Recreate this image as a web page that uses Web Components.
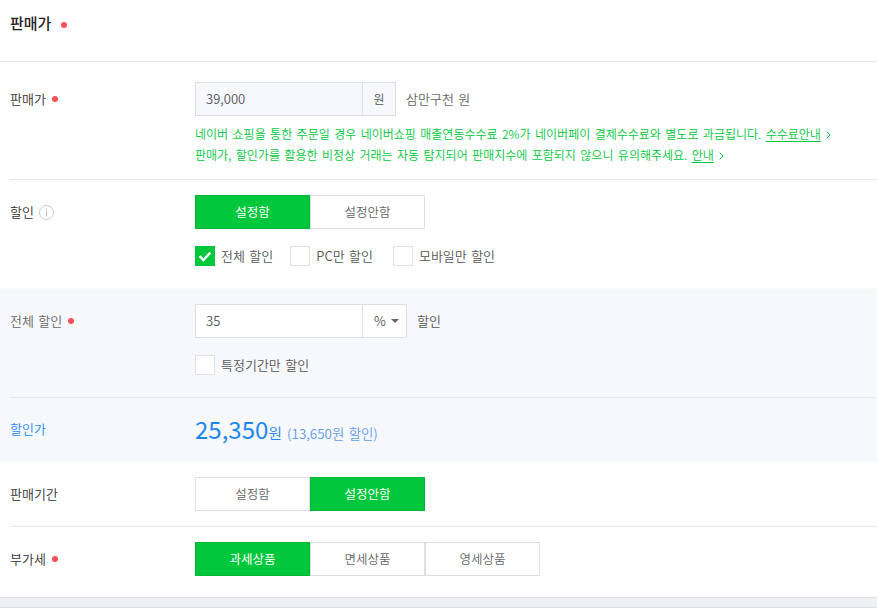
<!DOCTYPE html>
<html><head><meta charset="utf-8">
<style>
html,body{margin:0;padding:0;background:#fff;overflow:hidden}
body{font:350 13px/20px "Noto Sans CJK KR","Noto Sans",sans-serif;word-spacing:1.5px;color:#424242;width:877px;height:611px}
</style></head><body>
<price-form></price-form>
<script>
class ReqDot extends HTMLElement{constructor(){super();this.attachShadow({mode:'open'}).innerHTML=`<style>:host{display:inline-block;width:6px;height:6px;border-radius:50%;background:#ff5058;flex:none}</style>`}}
customElements.define('req-dot',ReqDot);

class FormRow extends HTMLElement{constructor(){super();this.attachShadow({mode:'open'}).innerHTML=`<style>
:host{display:grid;grid-template-columns:185px 1fr;padding:0 0 0 10px;box-sizing:border-box}
.l{display:flex;align-items:center;gap:6px;height:34px;font-size:13px;color:var(--lc,#333)}
.c{min-width:0}
</style><div class="l"><slot name="label"></slot></div><div class="c"><slot></slot></div>`}}
customElements.define('form-row',FormRow);

class BtnGroup extends HTMLElement{
 constructor(){super();this.attachShadow({mode:'open'})}
 connectedCallback(){
  const items=this.getAttribute('items').split('|'),on=+this.getAttribute('on');
  this.shadowRoot.innerHTML=`<style>
  :host{display:flex}
  span{box-sizing:border-box;width:115px;height:34px;display:flex;align-items:center;justify-content:center;background:#fff;border:1px solid #dcdee4;font-size:12.5px;color:#666}
  span.on{background:#00c73c;border-color:#00b836;color:#fff;font-weight:400}
  </style>`+items.map((t,i)=>`<span class="${i===on?'on':''}">${t}</span>`).join('');
 }}
customElements.define('btn-group',BtnGroup);

class CheckItem extends HTMLElement{
 constructor(){super();this.attachShadow({mode:'open'})}
 connectedCallback(){
  const c=this.hasAttribute('checked');
  this.shadowRoot.innerHTML=`<style>
  :host{display:inline-flex;align-items:center;gap:6px;height:20px;font-size:13px;color:#555}
  b{box-sizing:border-box;width:20px;height:20px;border:1px solid #dfe1e7;background:${c?'#00c73c':'#fff'};${c?'border-color:#00c73c;':''}display:block}
  svg{display:block}
  </style><b>${c?'<svg width="18" height="18" viewBox="0 0 18 18"><path d="M3.5 9.2 7.4 13 14.3 5.6" fill="none" stroke="#fff" stroke-width="2.4"/></svg>':''}</b><slot></slot>`;
 }}
customElements.define('check-item',CheckItem);

class PriceForm extends HTMLElement{constructor(){super();this.attachShadow({mode:'open'}).innerHTML=`<style>
:host{display:block;width:877px;height:611px;overflow:hidden;background:#fff}
header{box-sizing:border-box;border-bottom:1px solid #e3e5eb;height:62px;display:flex;align-items:flex-start;gap:10px;padding:12px 0 0 10px}
header h2{margin:0;font-size:15px;font-weight:500;line-height:22px;color:#222}
header req-dot{margin-top:10px}
.line{height:1px;background:#e6e7ec;margin-left:10px}
.r1{padding-top:20px;height:117px}
.box{display:flex;align-items:center}
.inp{box-sizing:border-box;height:34px;width:168px;border:1px solid #dcdee4;padding:0 10px;display:flex;align-items:center;font-size:13px;color:#555;background:#f7f8fc}
.unit{box-sizing:border-box;height:34px;width:33px;border:1px solid #dcdee4;border-left:0;display:flex;align-items:center;justify-content:center;font-size:12px;color:#555;background:#f7f8fc}
.after{margin-left:10px;color:#666;font-size:13px}
.note{margin:7px 0 0;font-size:12px;line-height:21px;color:#00c73c;white-space:nowrap;word-spacing:1.75px}
.note u{text-underline-offset:2px}
.note svg{margin-left:1px;vertical-align:0}
.r2{padding-top:15px;height:109px}
.checks{display:flex;gap:17px;margin-top:17px}
.m2{margin-left:3px}
.info{display:inline-block;margin-left:-1px}
.gray{background:#f7f8fc}
.r3{padding-top:15px;height:108px}
.r3 .inp{background:#fff}
.sel{box-sizing:border-box;height:34px;width:44px;border:1px solid #dcdee4;border-left:0;background:#fff;display:flex;align-items:center;padding-left:11px;gap:5px;font-size:13px;color:#555}
.sel i{width:0;height:0;border:4px solid transparent;border-top:4px solid #666;border-bottom:0}
.r4{height:64px;padding-top:14px;--lc:#1e88f0}
.price{display:flex;align-items:baseline;color:#1e88f0;height:34px;line-height:34px;font-size:15px}
.price b{font-weight:400;font-size:24px}
.price small{font-size:13.4px;margin-left:5px;color:#5f9cf0}
.r5{height:64px;padding-top:15px}
.r6{height:70px;padding-top:15px}
.foot{height:11px;background:#eef0f4;border-top:1px solid #dcdee4;border-bottom:1px solid #dcdee4;box-sizing:border-box}
</style>
<header><h2>판매가</h2><req-dot></req-dot></header>
<form-row class="r1"><span slot="label">판매가</span><req-dot slot="label"></req-dot>
 <div class="box"><div class="inp">39,000</div><div class="unit">원</div><span class="after">삼만구천 원</span></div>
 <p class="note">네이버 쇼핑을 통한 주문일 경우 네이버쇼핑 매출연동수수료 2%가 네이버페이 결제수수료와 별도로 과금됩니다. <u>수수료안내</u> <svg width="5" height="8" viewBox="0 0 5 8"><path d="M.7.7 4 4 .7 7.3" fill="none" stroke="#00c73c"/></svg><br>판매가, 할인가를 활용한 비정상 거래는 자동 탐지되어 판매지수에 포함되지 않으니 유의해주세요. <u>안내</u> <svg width="5" height="8" viewBox="0 0 5 8"><path d="M.7.7 4 4 .7 7.3" fill="none" stroke="#00c73c"/></svg></p>
</form-row>
<div class="line"></div>
<form-row class="r2"><span slot="label">할인</span>
 <svg slot="label" class="info" width="15" height="15" viewBox="0 0 15 15"><circle cx="7.5" cy="7.5" r="7" fill="none" stroke="#c9ccd4"/><path d="M7.5 6.5v5M7.5 3.5v1.4" stroke="#b4b8c2" stroke-width="1"/></svg>
 <btn-group items="설정함|설정안함" on="0"></btn-group>
 <div class="checks"><check-item checked>전체 할인</check-item><check-item>PC만 할인</check-item><check-item class="m2">모바일만 할인</check-item></div>
</form-row>
<div class="gray">
 <form-row class="r3"><span slot="label" style="color:#666">전체 할인</span><req-dot slot="label"></req-dot>
  <div class="box"><div class="inp">35</div><div class="sel">%<i></i></div><span class="after" style="color:#555">할인</span></div>
  <div class="checks"><check-item>특정기간만 할인</check-item></div>
 </form-row>
 <div class="line"></div>
 <form-row class="r4"><span slot="label">할인가</span>
  <div class="price"><b>25,350</b>원<small>(13,650원 할인)</small></div>
 </form-row>
</div>
<form-row class="r5"><span slot="label">판매기간</span><btn-group items="설정함|설정안함" on="1"></btn-group></form-row>
<div class="line"></div>
<form-row class="r6"><span slot="label">부가세</span><req-dot slot="label"></req-dot><btn-group items="과세상품|면세상품|영세상품" on="0"></btn-group></form-row>
<div class="foot"></div>`}}
customElements.define('price-form',PriceForm);
</script>
</body></html>
